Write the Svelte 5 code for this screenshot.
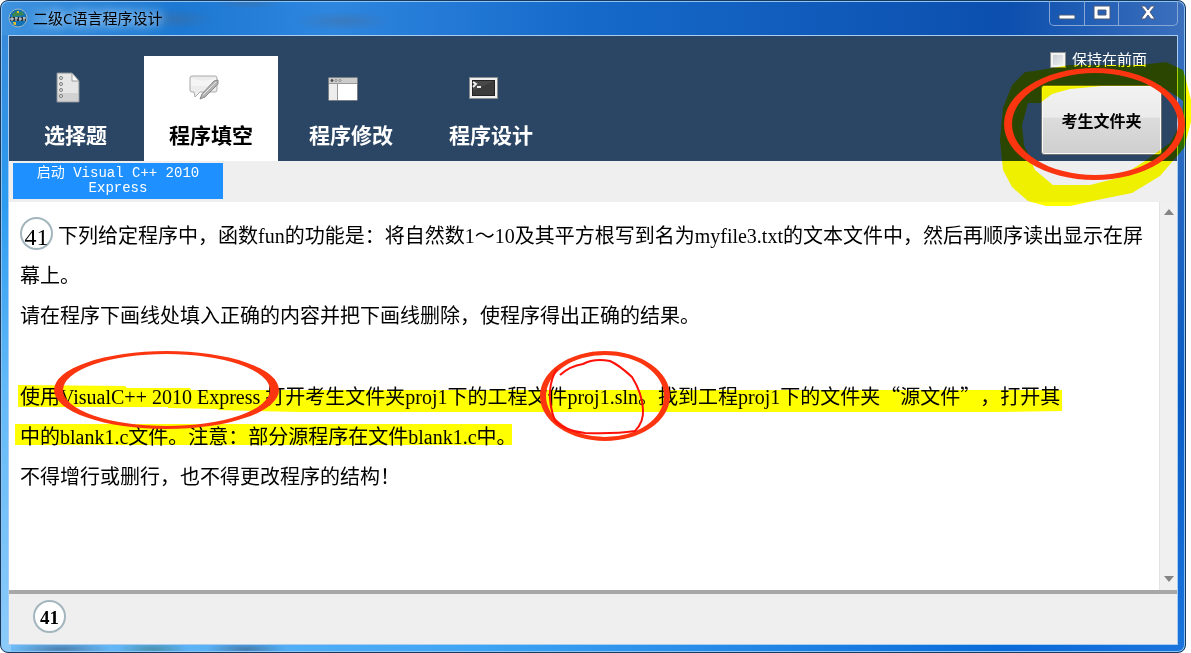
<script>
  const tabs = [
    { id: "choice", label: "选择题" },
    { id: "fill", label: "程序填空" },
    { id: "modify", label: "程序修改" },
    { id: "design", label: "程序设计" },
  ];

  let active = $state("fill");
  let keepOnTop = $state(false);
</script>

<div class="window">
  <header class="titlebar">
    <svg class="logo" viewBox="0 0 20 20" aria-hidden="true">
      <circle cx="10" cy="10" r="9" fill="#1272b8" stroke="#9fb5c0" />
      <path d="M4 6l4-3 3 2 3-2 2 4-6 1-5 1z" fill="#3c8652" />
      <path d="M9 3h2v2H9zM5 14h3v3H6z" fill="#e2bd28" />
      <path d="M2 9h16v4H2z" fill="#26343c" />
      <path d="M2 11h4M4 9v4M7 10h3M8 9v4M11 11h3M12 9v4M15 10h3M16 9v4" stroke="#dde4e6" />
    </svg>
    <h1>二级C语言程序设计</h1>
    <div class="controls">
      <button type="button" aria-label="最小化">
        <svg width="18" height="16" viewBox="0 0 18 16">
          <rect x="1" y="10" width="16" height="4" rx="1" fill="#fff" stroke="#4b5a78" />
        </svg>
      </button>
      <button type="button" aria-label="最大化">
        <svg width="18" height="16" viewBox="0 0 18 16">
          <path d="M1 1h16v13H1zM5 5v5h8V5z" fill="#fff" fill-rule="evenodd" stroke="#4b5a78" />
        </svg>
      </button>
      <button type="button" class="close" aria-label="关闭">
        <svg width="16" height="16" viewBox="0 0 16 16">
          <path d="M1 1h4l3 4 3-4h4l-5 6 5 7h-4l-3-4-3 4H1l5-7z" fill="#fff" stroke="#4b5a78" />
        </svg>
      </button>
    </div>
  </header>

  <div class="client">
    <div class="toolbar">
      <nav class="tabs">
        {#each tabs as tab (tab.id)}
          <button
            type="button"
            class="tab"
            class:active={active === tab.id}
            onclick={() => (active = tab.id)}
          >
            <svg width="32" height="32" viewBox="0 0 32 32" aria-hidden="true">
              {#if tab.id === "choice"}
                <path d="M4 1h15l7 8v21H4z" fill="#e6e6e6" stroke="#858d91" />
                <path d="M5 21h20v8H5z" fill="#d2d2d2" />
                <path d="M19 1v8h7z" fill="#fff" stroke="#9b9b9b" />
                <g fill="#eee" stroke="#777">
                  <circle cx="8" cy="6" r="1.5" />
                  <circle cx="8" cy="12" r="1.5" />
                  <circle cx="8" cy="18" r="1.5" />
                  <circle cx="8" cy="24" r="1.5" />
                </g>
              {:else if tab.id === "fill"}
                <path d="M4 4h23q2 0 2 2v12q0 2-2 2H12l-5 5-1-5H4q-2 0-2-2V6q0-2 2-2z" fill="#ececec" stroke="#aaa" />
                <path d="M3 6q12 5 25 0v8H3z" fill="#f5f5f5" />
                <path d="M12 27l2-5L26 9l4-1v4L17 25z" fill="#b4b4b4" stroke="#888" />
                <path d="M15 23L28 10" stroke="#e4e4e4" />
              {:else if tab.id === "modify"}
                <rect x="0.5" y="5.5" width="29" height="23" rx="1" fill="#fff" stroke="#777f84" />
                <path d="M1 6h28v5H1z" fill="#ccc" />
                <path d="M1 12h8v16H1z" fill="#ededed" />
                <path d="M1 11.500h28M9.500 12v16" stroke="#999" />
                <circle cx="4" cy="8.500" r="1" fill="#333" stroke="#555" />
                <circle cx="8" cy="8.500" r="1" fill="#eee" stroke="#888" />
                <circle cx="12" cy="8.500" r="1" fill="#eee" stroke="#888" />
              {:else}
                <rect x="1.5" y="5.5" width="28" height="21" fill="#f0f0f0" stroke="#8b8e8e" />
                <rect x="4.5" y="8.5" width="22" height="15" fill="#3b3b3b" stroke="#222" />
                <path d="M5 9h21L5 19z" fill="#484848" />
                <path d="M5 10l3 2-3 3M9 15h4" fill="none" stroke="#eee" stroke-width="2" />
              {/if}
            </svg>
            <span>{tab.label}</span>
          </button>
        {/each}
      </nav>
      <div class="side">
        <label class="keep">
          <input type="checkbox" bind:checked={keepOnTop} />
          保持在前面
        </label>
        <button type="button" class="folder">考生文件夹</button>
      </div>
    </div>

    <div class="launchbar">
      <button type="button" class="launch">启动 Visual C++ 2010 Express</button>
    </div>

    <div class="content">
      <article class="question">
        <p>
          <span class="badge">41</span>
          下列给定程序中，函数fun的功能是：将自然数1～10及其平方根写到名为myfile3.txt的文本文件中，然后再顺序读出显示在屏幕上。
        </p>
        <p>请在程序下画线处填入正确的内容并把下画线删除，使程序得出正确的结果。</p>
        <p class="gap">
          使用VisualC++ 2010 Express 打开考生文件夹proj1下的工程文件proj1.sln。找到工程proj1下的文件夹<span class="quote">“</span>源文件<span class="quote">”</span>，打开其<br />中的blank1.c文件。注意：部分源程序在文件blank1.c中。
        </p>
        <p>不得增行或删行，也不得更改程序的结构！</p>
      </article>
      <div class="scrollbar" aria-hidden="true">
        <svg width="10" height="6" viewBox="0 0 10 6"><path d="M5 0l5 6H0z" fill="#858585" /></svg>
        <svg width="10" height="6" viewBox="0 0 10 6"><path d="M0 0h10L5 6z" fill="#858585" /></svg>
      </div>
    </div>

    <footer class="footer">
      <button type="button" class="badge number">41</button>
    </footer>
  </div>
</div>

<!-- highlighter strokes, multiplied over the text -->
<svg class="ink marker" width="1191" height="653" viewBox="0 0 1191 653" aria-hidden="true">
  <path
    d="M18 385L125 386L127 388L190 388L191 390L1062 390V411L993 412H300L218 410V409L168 408V407H18zM15 424H512V445H15z"
    fill="#ff0"
  />
  <path
    d="M1186 80L1191 100V122L1184 148L1160 176L1132 193L1102 199L1070 206L1046 206L1028 201L1012 187L1003 170L1000 140L1003 108L1012 85L1025 72L1034 71L1070 65H1140L1166 62L1183 70zM1183 101Q1174 93 1158 86H1102L1070 89L1052 94L1040 103H1028L1022 125L1024 145L1035 170L1053 185L1090 185L1118 178L1145 161L1170 143L1182 122z"
    fill="#ff0"
    fill-rule="evenodd"
  />
</svg>
<svg class="ink" width="1191" height="653" viewBox="0 0 1191 653" aria-hidden="true">
  <g fill="#fb3510" fill-rule="evenodd">
    <path d="M54 390a112.5 39 0 1 0 225 0a112.5 39 0 1 0-225 0zM63 390a103.5 36 0 1 1 207 0a103.5 36 0 1 1-207 0z" />
    <path d="M540 396a65 45 0 1 0 130 0a65 45 0 1 0-130 0zM546 396a59 41 0 1 1 118 0a59 41 0 1 1-118 0z" />
    <path d="M1004 124a90.5 56 0 1 0 181 0a90.5 56 0 1 0-181 0zM1012 124a83 51 0 1 1 166 0a83 51 0 1 1-166 0z" />
  </g>
  <path
    d="M560 375Q570 366 583 364Q594 358 610 361Q619 365 632 377Q642 393 643 409Q644 422 635 431Q615 434 585 433Q565 431 555 421Q549 405 550 391Q551 378 557 369"
    fill="none"
    stroke="#ff1008"
    stroke-width="2"
  />
</svg>

<style>
  :global(body) {
    background: #fff;
    overflow: hidden;
  }
  button {
    font-family: inherit;
    border: 0;
    cursor: pointer;
  }
  .window {
    box-sizing: border-box;
    display: flex;
    flex-direction: column;
    height: 100vh;
    margin-right: 5px;
    padding: 0 7px 7px;
    border: 1px solid #16395f;
    border-radius: 8px;
    box-shadow: inset 0 0 0 1px #8fc3f2;
    background:
      radial-gradient(ellipse 40px 10px at 175px 18px, #4a699066, transparent),
      radial-gradient(ellipse 50px 10px at 342px 20px, #4a699066, transparent),
      radial-gradient(ellipse 34px 6px at 247px 2px, #4a699066, transparent),
      radial-gradient(ellipse 50px 8px at 60px 648px, #3a5a8099, transparent),
      radial-gradient(ellipse 36px 8px at 152px 648px, #3a7a8099, transparent),
      radial-gradient(ellipse 40px 8px at 245px 648px, #3a5a8099, transparent),
      linear-gradient(90deg, #3f93df 0, #1c78d2 15%, #2e86df 28%, #1569c9 50%, #0c4fae 85%, #3c70bd 100%) top / 100% 34px no-repeat,
      linear-gradient(#3b87d6, #2b9bf0 30%, #63baf8 60%, #8ccbfa) left / 10px 100% no-repeat,
      linear-gradient(#3c70bd, #0a5cc4 60%, #1a74dc) right / 10px 100% no-repeat,
      linear-gradient(90deg, #6fbcf7, #3fa4f4 40%, #0a6ad8 85%, #1a74dc);
    font-family: "Liberation Serif", "Noto Sans CJK SC", serif;
    color: #000;
  }
  .titlebar {
    display: flex;
    align-items: center;
    height: 34px;
    gap: 5px;
  }
  .logo {
    width: 20px;
    height: 20px;
  }
  h1 {
    margin: 0;
    flex: 1;
    font: 15px/20px "Open Sans", "Noto Sans CJK SC", sans-serif;
    text-shadow: 0 0 8px #b9dcfa, 0 0 12px #b9dcfa;
  }
  .controls {
    display: flex;
    align-self: flex-start;
    border: 1px solid #86a7d6;
    border-top: 0;
    border-radius: 0 0 5px 5px;
  }
  .controls button {
    display: grid;
    place-items: center;
    width: 34px;
    height: 24px;
    padding: 0;
    background: transparent;
  }
  .controls button + button {
    border-left: 1px solid #86a7d6;
  }
  .controls .close {
    width: 59px;
  }
  .client {
    flex: 1;
    display: flex;
    flex-direction: column;
    min-height: 0;
    border: 1px solid #a9cdf0;
    background: #efefef;
  }
  .toolbar {
    display: flex;
    justify-content: space-between;
    background: #2b4665;
  }
  .tabs {
    display: flex;
    gap: 6px;
    padding: 20px 0 0 4px;
  }
  .tab {
    display: flex;
    flex-direction: column;
    align-items: center;
    gap: 16px;
    min-width: 125px;
    padding: 16px 25px 9px;
    background: transparent;
    color: #fff;
    font-size: 21px;
    font-weight: bold;
    line-height: 32px;
  }
  .tab svg {
    margin-right: 14px;
  }
  .tab.active {
    background: #fff;
    color: #000;
  }
  .side {
    display: flex;
    flex-direction: column;
    gap: 14px;
    padding: 13px 15px 0 0;
  }
  .keep {
    display: flex;
    align-items: center;
    gap: 6px;
    padding-left: 9px;
    color: #fff;
    font-size: 15px;
    line-height: 22px;
  }
  .keep input {
    appearance: none;
    width: 16px;
    height: 16px;
    margin: 0;
    border: 1px solid #8e8f8f;
    box-shadow: inset 0 0 0 2px #f4f4f4;
    background: linear-gradient(135deg, #c3c8d0, #f4f4f4);
  }
  .keep input:checked {
    background: #2b4665;
  }
  .folder {
    width: 121px;
    height: 70px;
    border: 1px solid #707070;
    border-radius: 3px;
    box-shadow: inset 0 0 0 1px #fafafa;
    background: linear-gradient(#f2f2f2, #ebebeb 46%, #dcdcdc 47%, #cfcfcf);
    font-size: 16px;
    font-weight: bold;
  }
  .launchbar {
    padding: 2px 4px 3px;
  }
  .launch {
    display: block;
    width: 210px;
    height: 36px;
    padding: 0 20px;
    background: #1e90ff;
    color: #fff;
    font: 14px/15px "Liberation Mono", "Noto Sans CJK SC", monospace;
  }
  .content {
    flex: 1;
    display: flex;
    min-height: 0;
    background: #fff;
  }
  .question {
    flex: 1;
    padding: 14px 12px 0 11px;
    font-size: 20px;
    line-height: 40px;
    text-spacing-trim: space-all;
  }
  .question p {
    margin: 0;
  }
  .question .gap {
    margin-top: 40px;
  }
  .quote {
    font-family: "Noto Sans CJK SC", sans-serif;
  }
  .badge {
    box-sizing: border-box;
    display: inline-block;
    width: 33px;
    height: 33px;
    padding: 0;
    border: 2px solid #a3b5bd;
    border-radius: 50%;
    background: #fff;
    font-size: 24px;
    line-height: 36px;
    text-align: center;
    vertical-align: -2px;
  }
  .badge.number {
    font-size: 19px;
    font-weight: bold;
    line-height: 31px;
  }
  .scrollbar {
    display: flex;
    flex-direction: column;
    align-items: center;
    justify-content: space-between;
    width: 17px;
    padding: 7px 0 8px;
    border-left: 1px solid #e3e3e3;
    background: #f0f0f0;
  }
  .footer {
    display: flex;
    align-items: flex-start;
    box-sizing: border-box;
    height: 54px;
    padding: 6px 24px 0;
    border-top: 4px solid #a8a8a8;
  }
  .ink {
    position: absolute;
    top: 0;
    left: 0;
    pointer-events: none;
  }
  .marker {
    mix-blend-mode: multiply;
  }
</style>
